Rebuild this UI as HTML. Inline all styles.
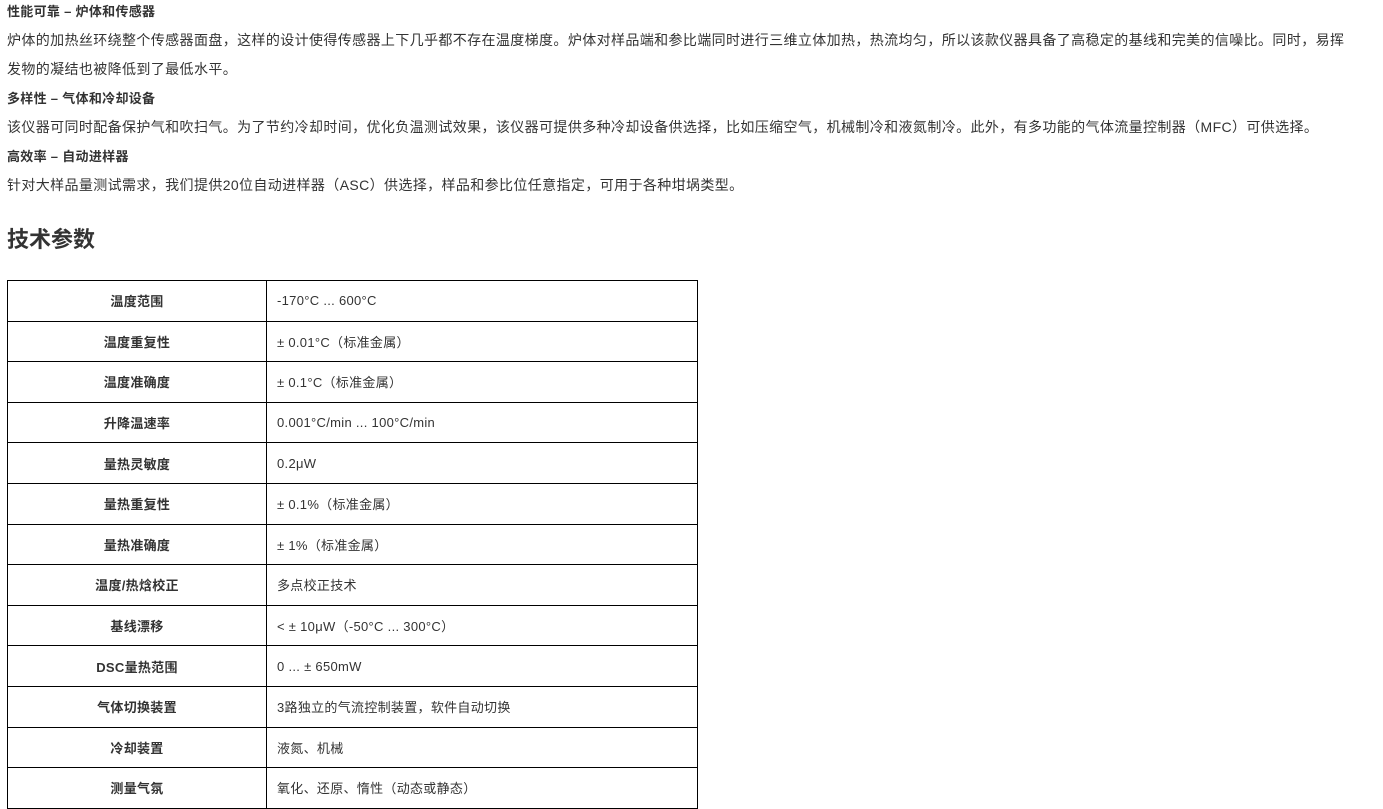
<!DOCTYPE html>
<html><head><meta charset="utf-8"><style>
body{margin:0;background:#fff;color:#333;font-family:"Liberation Sans","Noto Sans CJK SC",sans-serif;font-size:14px;}
.w{position:absolute;left:7px;top:0;width:1370px}
p{margin:0;line-height:29px;height:29px;white-space:nowrap;letter-spacing:0.38px}
p.b{font-weight:bold;font-size:13px;letter-spacing:0.3px}
h2{position:absolute;left:7px;top:222px;margin:0;font-size:22px;font-weight:bold;line-height:36px;color:#333}
table{position:absolute;left:7px;top:280px;border-collapse:collapse;width:691px;font-size:13px}
td{border:1px solid #000;height:40.6px;padding:0 10px;box-sizing:border-box;letter-spacing:0.3px}
td:first-child{width:259px;text-align:center;font-weight:bold}
</style></head><body>
<div class="w" style="top:-3px">
<p class="b">性能可靠 – 炉体和传感器</p>
<p>炉体的加热丝环绕整个传感器面盘，这样的设计使得传感器上下几乎都不存在温度梯度。炉体对样品端和参比端同时进行三维立体加热，热流均匀，所以该款仪器具备了高稳定的基线和完美的信噪比。同时，易挥</p>
<p>发物的凝结也被降低到了最低水平。</p>
<p class="b">多样性 – 气体和冷却设备</p>
<p>该仪器可同时配备保护气和吹扫气。为了节约冷却时间，优化负温测试效果，该仪器可提供多种冷却设备供选择，比如压缩空气，机械制冷和液氮制冷。此外，有多功能的气体流量控制器（MFC）可供选择。</p>
<p class="b">高效率 – 自动进样器</p>
<p>针对大样品量测试需求，我们提供20位自动进样器（ASC）供选择，样品和参比位任意指定，可用于各种坩埚类型。</p>
</div>
<h2>技术参数</h2>
<table>
<tr><td>温度范围</td><td>-170°C ... 600°C</td></tr>
<tr><td>温度重复性</td><td>± 0.01°C（标准金属）</td></tr>
<tr><td>温度准确度</td><td>± 0.1°C（标准金属）</td></tr>
<tr><td>升降温速率</td><td>0.001°C/min ... 100°C/min</td></tr>
<tr><td>量热灵敏度</td><td>0.2μW</td></tr>
<tr><td>量热重复性</td><td>± 0.1%（标准金属）</td></tr>
<tr><td>量热准确度</td><td>± 1%（标准金属）</td></tr>
<tr><td>温度/热焓校正</td><td>多点校正技术</td></tr>
<tr><td>基线漂移</td><td>&lt; ± 10μW（-50°C ... 300°C）</td></tr>
<tr><td>DSC量热范围</td><td>0 ... ± 650mW</td></tr>
<tr><td>气体切换装置</td><td>3路独立的气流控制装置，软件自动切换</td></tr>
<tr><td>冷却装置</td><td>液氮、机械</td></tr>
<tr><td>测量气氛</td><td>氧化、还原、惰性（动态或静态）</td></tr>
</table>
</body></html>
